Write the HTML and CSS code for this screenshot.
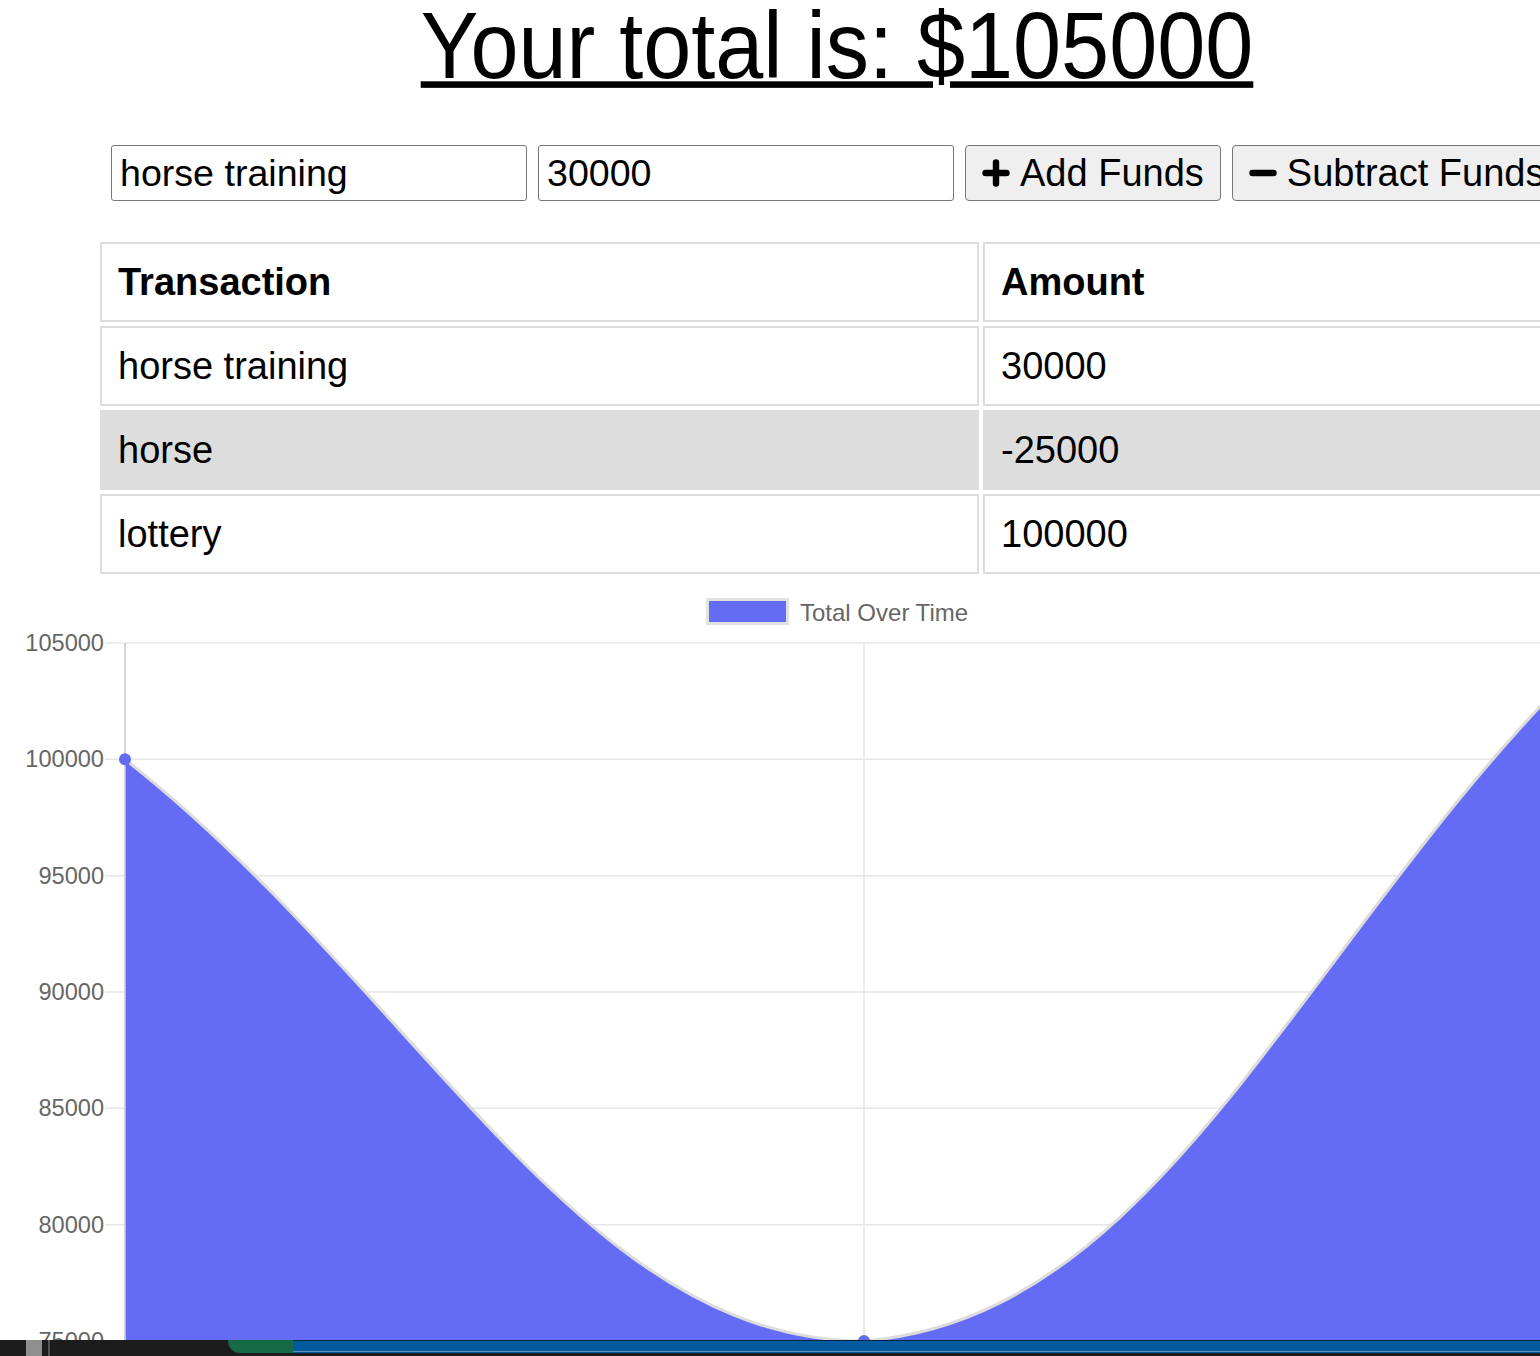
FILE: index.html
```html
<!DOCTYPE html>
<html lang="en">
<head>
<meta charset="utf-8">
<title>Budget Tracker</title>
<link rel="stylesheet" href="styles.css">
</head>
<body>
<div class="page">
  <h1 class="title"><span class="title-text">Your total is: $105000</span></h1>

  <div class="controls">
    <input class="field" type="text" value="horse training">
    <input class="field" type="text" value="30000">
    <button class="btn" type="button">
      <svg class="btn-icon" viewBox="0 0 24 24" aria-hidden="true"><path d="M12 3v18M3 12h18" /></svg>
      <span>Add Funds</span>
    </button>
    <button class="btn" type="button">
      <svg class="btn-icon" viewBox="0 0 24 24" aria-hidden="true"><path d="M3 12h18" /></svg>
      <span>Subtract Funds</span>
    </button>
  </div>

  <table class="ledger">
    <thead>
      <tr><th class="col-name">Transaction</th><th>Amount</th></tr>
    </thead>
    <tbody>
      <tr><td>horse training</td><td>30000</td></tr>
      <tr class="row-alt"><td>horse</td><td>-25000</td></tr>
      <tr><td>lottery</td><td>100000</td></tr>
    </tbody>
  </table>

  <svg class="chart" width="1658" height="778" viewBox="0 0 1658 778">
    <g transform="translate(-8,-578)">
      <rect class="legend-box" x="707.5" y="599.5" width="80" height="24" />
      <text class="legend-text" x="800" y="612">Total Over Time</text>

      <g class="grid">
        <line x1="105" y1="643" x2="1666" y2="643" />
        <line x1="105" y1="759.3" x2="1666" y2="759.3" />
        <line x1="105" y1="875.7" x2="1666" y2="875.7" />
        <line x1="105" y1="992" x2="1666" y2="992" />
        <line x1="105" y1="1108.3" x2="1666" y2="1108.3" />
        <line x1="105" y1="1224.7" x2="1666" y2="1224.7" />
        <line x1="105" y1="1341" x2="1666" y2="1341" />
        <line x1="864" y1="643" x2="864" y2="1351" />
        <line x1="1603" y1="643" x2="1603" y2="1351" />
      </g>

      <g class="ticks">
        <text x="104" y="643">105000</text>
        <text x="104" y="759.3">100000</text>
        <text x="104" y="875.7">95000</text>
        <text x="104" y="992">90000</text>
        <text x="104" y="1108.3">85000</text>
        <text x="104" y="1224.7">80000</text>
        <text x="104" y="1341">75000</text>
      </g>

      <path class="area" d="M125 759.3 C420.6 992.1 579.9 1341 864 1341 C1171.1 1316.8 1307.4 922.2 1603 643 L1603 1341 L125 1341 Z" />
      <path class="line" d="M125 759.3 C420.6 992.1 579.9 1341 864 1341 C1171.1 1316.8 1307.4 922.2 1603 643" />
      <line class="axis" x1="125" y1="643" x2="125" y2="1351" />
      <circle class="point" cx="125" cy="759.3" r="6" />
      <circle class="point" cx="864" cy="1341" r="6" />
      <circle class="point" cx="1603" cy="643" r="6" />
    </g>
  </svg>
</div>

<div class="taskbar">
  <span class="tb-square"></span>
  <span class="tb-sep"></span>
  <span class="tb-green"></span>
  <span class="tb-blue"></span>
</div>
</body>
</html>
```
FILE: styles.css
```css
html, body {
  margin: 0;
  padding: 0;
  overflow: hidden;
  background: #ffffff;
}

body {
  font-family: "Liberation Sans", Arial, Helvetica, sans-serif;
  color: #000000;
}

.page {
  width: 1658px;
  margin-left: 8px;
}

.title {
  margin: 0;
  padding-top: 5px;
  height: 85px;
  font-size: 86.4px;
  line-height: 86px;
  font-weight: normal;
  text-align: center;
}

.title-text {
  display: inline-block;
  text-decoration: underline;
  text-decoration-thickness: 5.5px;
  text-underline-offset: 3px;
  transform: scaleY(1.09);
  transform-origin: 50% 72.6px;
}

.controls {
  display: flex;
  gap: 11px;
  margin-top: 55px;
  padding-left: 103px;
  height: 56px;
}

.field {
  flex: 0 0 auto;
  width: 416px;
  height: 56px;
  box-sizing: border-box;
  margin: 0;
  padding: 0 8px;
  border: 1px solid #767676;
  border-radius: 3px;
  background: #ffffff;
  font-family: "Liberation Sans", Arial, sans-serif;
  font-size: 37.6px;
  color: #000000;
}

.btn {
  flex: 0 0 auto;
  display: flex;
  align-items: center;
  gap: 10px;
  height: 56px;
  box-sizing: border-box;
  margin: 0;
  padding: 0 16px 0 16px;
  border: 1px solid #767676;
  border-radius: 4px;
  background: #efefef;
  font-family: "Liberation Sans", Arial, sans-serif;
  font-size: 38px;
  color: #000000;
}

.btn-icon {
  width: 28px;
  height: 28px;
  fill: none;
  stroke: #000000;
  stroke-width: 5.5;
  stroke-linecap: round;
}

.ledger {
  width: 1482px;
  margin: 37px auto 0;
  border-collapse: separate;
  border-spacing: 4px;
  table-layout: fixed;
  font-size: 38px;
}

.ledger th,
.ledger td {
  box-sizing: border-box;
  border: 2px solid #dddddd;
  padding: 16px;
  line-height: 44px;
  text-align: left;
  white-space: nowrap;
}

.ledger th {
  font-weight: bold;
}

.col-name {
  width: 879px;
}

.row-alt td {
  background: #dddddd;
}

.chart {
  display: block;
  overflow: visible;
  font-family: "Liberation Sans", Arial, sans-serif;
}

.legend-box {
  fill: #646cf6;
  stroke: #e2e2e2;
  stroke-width: 3;
}

.legend-text {
  font-size: 24px;
  fill: #666666;
  dominant-baseline: central;
}

.grid line {
  stroke: #e6e6e6;
  stroke-width: 1.6;
}

.ticks text {
  font-size: 23.6px;
  fill: #666666;
  text-anchor: end;
  dominant-baseline: central;
}

.area {
  fill: #646cf6;
}

.line {
  fill: none;
  stroke: #dcdcdc;
  stroke-width: 3;
}

.axis {
  stroke: #cccccc;
  stroke-width: 1.6;
}

.point {
  fill: #646cf6;
}

.taskbar {
  position: fixed;
  left: 0;
  right: 0;
  bottom: 0;
  height: 16px;
  display: flex;
  align-items: flex-start;
  background: #1c1c1c;
}

.tb-square {
  width: 16px;
  height: 16px;
  margin-left: 26px;
  background: #8f8f8f;
}

.tb-sep {
  width: 2px;
  height: 16px;
  margin-left: 6px;
  background: #555555;
}

.tb-green {
  width: 65px;
  height: 13px;
  margin-left: 178px;
  border-bottom-left-radius: 12px;
  background: #166a45;
}

.tb-blue {
  flex: 1;
  height: 13px;
  background: linear-gradient(#0a2540 0, #0a2540 1px, #005a9c 1px, #005a9c 11px, #5b8fb9 11px, #5b8fb9 12px, #005a9c 12px);
}
```
